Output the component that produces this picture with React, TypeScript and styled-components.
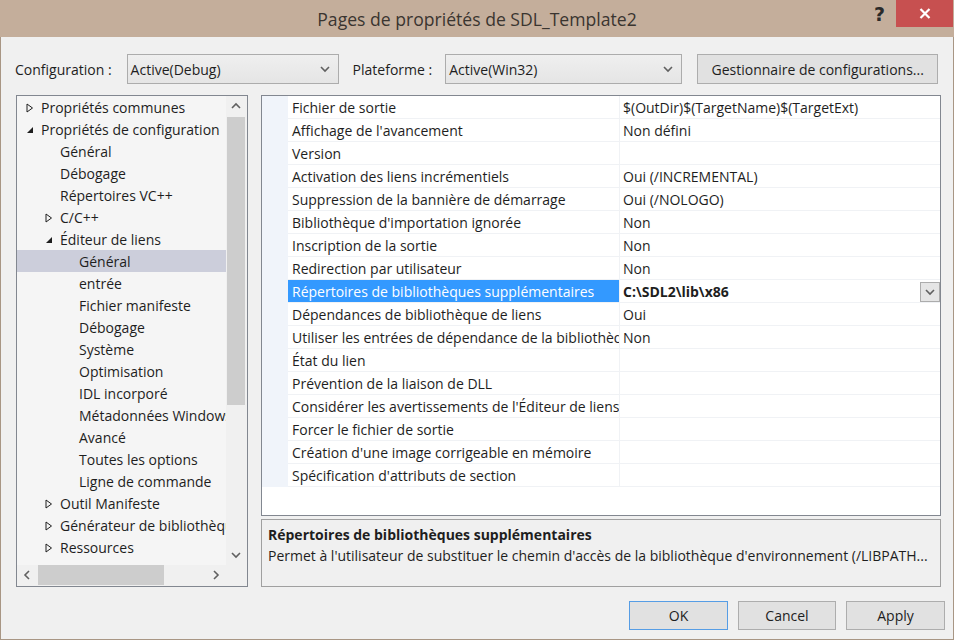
import React from 'react';
import styled, { createGlobalStyle } from 'styled-components';

type TreeItem = {
  label: string;
  level: number;
  toggle?: 'open' | 'closed';
  selected?: boolean;
};

const treeItems: TreeItem[] = [
  { label: 'Propriétés communes', level: 0, toggle: 'closed' },
  { label: 'Propriétés de configuration', level: 0, toggle: 'open' },
  { label: 'Général', level: 1 },
  { label: 'Débogage', level: 1 },
  { label: 'Répertoires VC++', level: 1 },
  { label: 'C/C++', level: 1, toggle: 'closed' },
  { label: 'Éditeur de liens', level: 1, toggle: 'open' },
  { label: 'Général', level: 2, selected: true },
  { label: 'entrée', level: 2 },
  { label: 'Fichier manifeste', level: 2 },
  { label: 'Débogage', level: 2 },
  { label: 'Système', level: 2 },
  { label: 'Optimisation', level: 2 },
  { label: 'IDL incorporé', level: 2 },
  { label: 'Métadonnées Windows', level: 2 },
  { label: 'Avancé', level: 2 },
  { label: 'Toutes les options', level: 2 },
  { label: 'Ligne de commande', level: 2 },
  { label: 'Outil Manifeste', level: 1, toggle: 'closed' },
  { label: 'Générateur de bibliothèque', level: 1, toggle: 'closed' },
  { label: 'Ressources', level: 1, toggle: 'closed' },
];

const properties: { name: string; value: string; selected?: boolean }[] = [
  { name: 'Fichier de sortie', value: '$(OutDir)$(TargetName)$(TargetExt)' },
  { name: "Affichage de l'avancement", value: 'Non défini' },
  { name: 'Version', value: '' },
  { name: 'Activation des liens incrémentiels', value: 'Oui (/INCREMENTAL)' },
  { name: 'Suppression de la bannière de démarrage', value: 'Oui (/NOLOGO)' },
  { name: "Bibliothèque d'importation ignorée", value: 'Non' },
  { name: 'Inscription de la sortie', value: 'Non' },
  { name: 'Redirection par utilisateur', value: 'Non' },
  { name: 'Répertoires de bibliothèques supplémentaires', value: 'C:\\SDL2\\lib\\x86', selected: true },
  { name: 'Dépendances de bibliothèque de liens', value: 'Oui' },
  { name: 'Utiliser les entrées de dépendance de la bibliothèque', value: 'Non' },
  { name: 'État du lien', value: '' },
  { name: 'Prévention de la liaison de DLL', value: '' },
  { name: "Considérer les avertissements de l'Éditeur de liens", value: '' },
  { name: 'Forcer le fichier de sortie', value: '' },
  { name: "Création d'une image corrigeable en mémoire", value: '' },
  { name: "Spécification d'attributs de section", value: '' },
];

const Chevron = ({ dir }: { dir: 'up' | 'down' | 'left' | 'right' }) => {
  const d = {
    up: 'M1 6 L5 2 L9 6',
    down: 'M1 2 L5 6 L9 2',
    left: 'M6 1 L2 5 L6 9',
    right: 'M2 1 L6 5 L2 9',
  }[dir];
  const vertical = dir === 'up' || dir === 'down';
  return (
    <svg width={vertical ? 10 : 8} height={vertical ? 8 : 10} viewBox={vertical ? '0 0 10 8' : '0 0 8 10'}>
      <path d={d} fill="none" stroke="#606060" strokeWidth="1.6" />
    </svg>
  );
};

const Toggle = ({ state }: { state: 'open' | 'closed' }) =>
  state === 'closed' ? (
    <svg width="8" height="10" viewBox="0 0 8 10">
      <path d="M1 1 L6.5 5 L1 9 Z" fill="none" stroke="#1e1e1e" strokeWidth="1" />
    </svg>
  ) : (
    <svg width="8" height="10" viewBox="0 0 8 10">
      <path d="M7 2 L7 8 L1 8 Z" fill="#1e1e1e" />
    </svg>
  );

function App() {
  return (
    <>
      <GlobalStyle />
      <Frame>
        <TitleBar>
          <span />
          <Title>Pages de propriétés de SDL_Template2</Title>
          <WindowControls>
            <HelpMark>?</HelpMark>
            <CloseButton>
              <svg width="12" height="11" viewBox="0 0 12 11">
                <path d="M1.5 1 L10.5 10 M10.5 1 L1.5 10" stroke="#fff" strokeWidth="2.2" />
              </svg>
            </CloseButton>
          </WindowControls>
        </TitleBar>

        <Body>
          <ConfigRow>
            <Label>Configuration :</Label>
            <Combo width={212}>
              <span>Active(Debug)</span>
              <Chevron dir="down" />
            </Combo>
            <Label spaced>Plateforme :</Label>
            <Combo width={237}>
              <span>Active(Win32)</span>
              <Chevron dir="down" />
            </Combo>
            <PushButton width={241}>Gestionnaire de configurations...</PushButton>
          </ConfigRow>

          <MainArea>
            <TreeBox>
              <TreeViewport>
                {treeItems.map((item, i) => (
                  <TreeRow key={i} level={item.level} selected={item.selected}>
                    <ToggleSlot>{item.toggle && <Toggle state={item.toggle} />}</ToggleSlot>
                    <span>{item.label}</span>
                  </TreeRow>
                ))}
              </TreeViewport>
              <VScroll>
                <ArrowCell><Chevron dir="up" /></ArrowCell>
                <VThumb />
                <Spacer />
                <ArrowCell><Chevron dir="down" /></ArrowCell>
              </VScroll>
              <HScroll>
                <ArrowCell><Chevron dir="left" /></ArrowCell>
                <HThumb />
                <Spacer />
                <ArrowCell><Chevron dir="right" /></ArrowCell>
              </HScroll>
              <Corner />
            </TreeBox>

            <RightColumn>
              <PropertyGrid>
                {properties.map((p, i) => (
                  <PropRow key={i}>
                    <Gutter />
                    <NameCell selected={p.selected}>{p.name}</NameCell>
                    <ValueCell bold={p.selected}>
                      <span>{p.value}</span>
                      {p.selected && (
                        <DropButton>
                          <Chevron dir="down" />
                        </DropButton>
                      )}
                    </ValueCell>
                  </PropRow>
                ))}
              </PropertyGrid>
              <Description>
                <DescTitle>Répertoires de bibliothèques supplémentaires</DescTitle>
                <DescText>
                  Permet à l'utilisateur de substituer le chemin d'accès de la bibliothèque d'environnement (/LIBPATH...
                </DescText>
              </Description>
            </RightColumn>
          </MainArea>

          <Footer>
            <PushButton width={99} focused>OK</PushButton>
            <PushButton width={98}>Cancel</PushButton>
            <PushButton width={99}>Apply</PushButton>
          </Footer>
        </Body>
      </Frame>
    </>
  );
}

export default App;

const GlobalStyle = createGlobalStyle`
  html, body {
    margin: 0;
    padding: 0;
    background: #f0f0f0;
  }
  body {
    font-family: "Open Sans", "Noto Sans", sans-serif;
    font-size: 13.5px;
    color: #1e1e1e;
  }
`;

const Frame = styled.div`
  width: 954px;
  height: 640px;
  box-sizing: border-box;
  border: 1px solid #a89684;
  border-top: none;
  background: #f0f0f0;
  display: flex;
  flex-direction: column;
`;

const TitleBar = styled.div`
  height: 37px;
  flex-shrink: 0;
  background: #c4ae9b;
  display: grid;
  grid-template-columns: 1fr auto 1fr;
  align-items: start;
  margin: 0 -1px;
  padding: 0 1px;
`;

const Title = styled.div`
  font-size: 17.6px;
  color: #3a3530;
  line-height: 38px;
  white-space: nowrap;
`;

const WindowControls = styled.div`
  display: flex;
  justify-content: flex-end;
  align-items: flex-start;
`;

const HelpMark = styled.div`
  font-family: "DejaVu Sans", sans-serif;
  font-weight: bold;
  font-size: 19px;
  color: #2a2a2a;
  margin: 3px 11px 0 0;
  line-height: 22px;
`;

const CloseButton = styled.div`
  width: 57px;
  height: 27px;
  background: #c75050;
  display: flex;
  align-items: center;
  justify-content: center;
`;

const Body = styled.div`
  flex: 1;
  display: flex;
  flex-direction: column;
  padding: 17px 12px 0 14px;
`;

const ConfigRow = styled.div`
  display: flex;
  align-items: center;
  height: 30px;
`;

const Label = styled.div<{ spaced?: boolean }>`
  font-size: 14px;
  white-space: nowrap;
  margin-right: ${({ spaced }) => (spaced ? 13 : 15)}px;
  margin-left: ${({ spaced }) => (spaced ? 14 : 0)}px;
`;

const Combo = styled.div<{ width: number }>`
  width: ${({ width }) => width}px;
  height: 30px;
  box-sizing: border-box;
  border: 1px solid #acacac;
  background: linear-gradient(#efefef, #e5e5e5);
  display: flex;
  align-items: center;
  justify-content: space-between;
  padding: 0 8px 0 3px;
  font-size: 14px;
`;

const PushButton = styled.div<{ width: number; focused?: boolean }>`
  width: ${({ width }) => width}px;
  height: 29px;
  box-sizing: border-box;
  border: 1px solid ${({ focused }) => (focused ? '#569de5' : '#adadad')};
  background: #e1e1e1;
  display: flex;
  align-items: center;
  justify-content: center;
  font-size: 14px;
  white-space: nowrap;
  ${ConfigRow} & {
    margin-left: 15px;
    height: 30px;
  }
`;

const MainArea = styled.div`
  display: flex;
  gap: 13px;
  margin-top: 11px;
  margin-left: 1px;
  height: 492px;
`;

const TreeBox = styled.div`
  width: 232px;
  box-sizing: border-box;
  border: 1px solid #828790;
  background: #f5f5f5;
  display: grid;
  grid-template-columns: 209px 21px;
  grid-template-rows: 469px 21px;
`;

const TreeViewport = styled.div`
  overflow: hidden;
`;

const TreeRow = styled.div<{ level: number; selected?: boolean }>`
  height: 22px;
  box-sizing: border-box;
  padding-top: 1px;
  display: flex;
  align-items: center;
  white-space: nowrap;
  padding-left: ${({ level }) => 9 + level * 19}px;
  background: ${({ selected }) => (selected ? '#cccedb' : 'transparent')};
  font-size: 14px;
`;

const ToggleSlot = styled.span`
  width: 15px;
  flex-shrink: 0;
  display: flex;
  align-items: center;
`;

const VScroll = styled.div`
  background: #f0f0f0;
  display: flex;
  flex-direction: column;
  padding-right: 1px;
`;

const HScroll = styled.div`
  background: #f0f0f0;
  display: flex;
  padding-bottom: 1px;
`;

const ArrowCell = styled.div`
  width: 20px;
  height: 20px;
  flex-shrink: 0;
  display: flex;
  align-items: center;
  justify-content: center;
`;

const VThumb = styled.div`
  height: 288px;
  margin: 1px 1px 0;
  background: #cdcdcd;
`;

const HThumb = styled.div`
  width: 126px;
  margin: 0 0 0 1px;
  background: #cdcdcd;
`;

const Spacer = styled.div`
  flex: 1;
`;

const Corner = styled.div`
  background: #f0f0f0;
`;

const RightColumn = styled.div`
  flex: 1;
  display: flex;
  flex-direction: column;
  gap: 3px;
`;

const PropertyGrid = styled.div`
  height: 421px;
  box-sizing: border-box;
  border: 1px solid #828790;
  background: #fff;
`;

const PropRow = styled.div`
  display: grid;
  grid-template-columns: 26px 332px 1fr;
  height: 23px;
  box-sizing: border-box;
  border-bottom: 1px solid #f0f2f5;
  font-size: 14px;
`;

const Gutter = styled.div`
  background: #f0f4fa;
  margin-bottom: -1px;
`;

const NameCell = styled.div<{ selected?: boolean }>`
  display: flex;
  align-items: center;
  padding: 1px 0 0 4px;
  white-space: nowrap;
  overflow: hidden;
  border-right: 1px solid #f0f2f5;
  background: ${({ selected }) => (selected ? '#3399ff' : 'transparent')};
  color: ${({ selected }) => (selected ? '#fff' : 'inherit')};
`;

const ValueCell = styled.div<{ bold?: boolean }>`
  display: flex;
  align-items: center;
  justify-content: space-between;
  padding: 1px 0 0 3px;
  white-space: nowrap;
  overflow: hidden;
  font-weight: ${({ bold }) => (bold ? 700 : 400)};
`;

const DropButton = styled.div`
  width: 20px;
  height: 20px;
  box-sizing: border-box;
  border: 1px solid #acacac;
  background: #e5e5e5;
  display: flex;
  align-items: center;
  justify-content: center;
`;

const Description = styled.div`
  flex: 1;
  box-sizing: border-box;
  border: 1px solid #a0a0a0;
  background: #f0f0f0;
  padding: 4px 6px;
  font-size: 14px;
`;

const DescTitle = styled.div`
  font-weight: 700;
  line-height: 21px;
`;

const DescText = styled.div`
  line-height: 22px;
  white-space: nowrap;
  overflow: hidden;
`;

const Footer = styled.div`
  display: flex;
  justify-content: flex-end;
  gap: 10px;
  margin-top: 14px;
  margin-right: -4px;
`;
